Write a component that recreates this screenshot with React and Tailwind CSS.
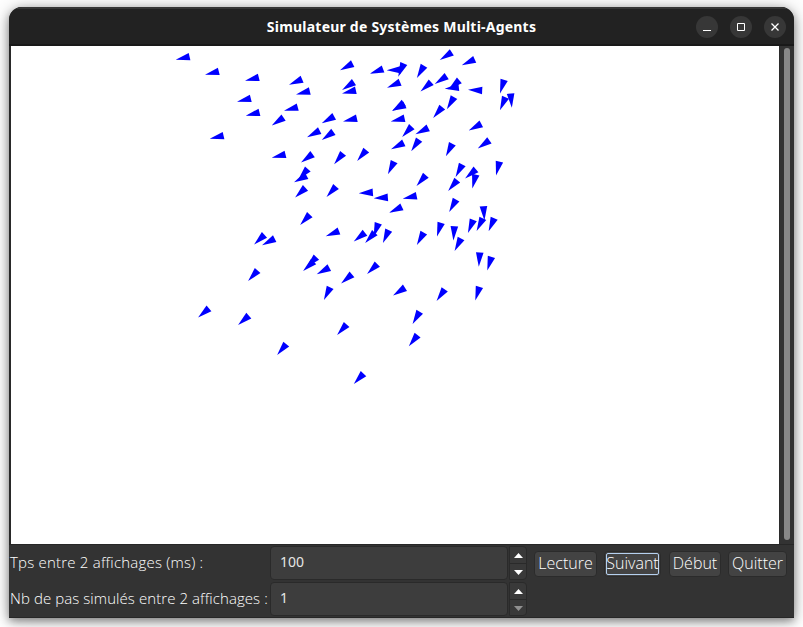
import React from "react";

// Each agent: [tip x, tip y, angle in degrees from tip towards the base]
const AGENTS = [
  [176, 59.7, 13], [205.3, 74.7, 14], [245.3, 80.7, 14], [237.3, 101.7, 14], [246, 115.7, 14],
  [210, 138.7, 13], [289.3, 84.7, 23], [296.3, 94.3, 14], [284.3, 110.7, 15], [272, 125.3, 34],
  [272, 157.7, 14], [307.3, 137, 27], [301.3, 162.3, 36], [294.3, 182, 28], [298.5, 179.3, 48],
  [295.3, 197.3, 43], [340.3, 70, 27], [370, 73.7, 20], [387, 70.3, 2], [398.3, 76.3, 67],
  [387.3, 87.7, 23], [417, 77.7, 60], [420.7, 91.3, 41], [342.3, 89.7, 33], [342.3, 93.3, 13],
  [392.3, 110.7, 34], [392.3, 110.7, 25], [391, 121.3, 13], [343.3, 121.3, 13], [322, 123, 29],
  [322, 139.7, 35], [402.3, 136.7, 47], [415.7, 134, 26], [391.3, 149, 26], [411.3, 151, 56],
  [440, 59.7, 32], [462, 65, 24], [435, 83.7, 33], [445, 88.7, 6], [448.7, 89.3, 40],
  [468.3, 89.7, -3], [500, 93, 73], [500, 110, 67], [511.7, 107.3, 95], [447, 109, 60],
  [433.3, 117.7, 50], [469, 130.3, 28], [478, 148.3, 35], [446, 156, 63], [334.3, 164, 51],
  [357.3, 160.7, 50], [388, 174, 64], [416.7, 185.7, 49], [326.7, 196.7, 48], [359, 193.3, 4],
  [374, 198.3, 4], [403, 198.7, 12], [389.3, 212.7, 25], [326, 236, 21], [354, 241.3, 38],
  [365.3, 242.7, 47], [373.7, 236.3, 71], [383, 242.7, 66], [417, 244.7, 61], [455.7, 176.7, 62],
  [465.3, 178.3, 40], [472.3, 188, 76], [448.3, 190.7, 50], [496, 175, 76], [449.3, 211.7, 61],
  [484.3, 220, 94], [476.7, 230.7, 64], [437, 236, 73], [453.3, 240, 86], [468, 232.7, 68],
  [488.7, 231, 67], [454.7, 250.7, 63], [478.7, 266.3, 86], [487.3, 270, 73], [436.7, 300.7, 55],
  [475.3, 300, 73], [300.3, 224.7, 47], [254.3, 244.3, 43], [262.3, 245, 27], [248.3, 280.7, 48],
  [303.3, 270.7, 42], [306.7, 267, 46], [317, 274, 28], [324, 299.7, 64], [198.3, 317.3, 40],
  [238.3, 324.7, 41], [277.3, 354.7, 50], [341.3, 283.3, 40], [367.3, 273.7, 44], [393.3, 295.3, 33],
  [337.3, 334.7, 48], [412.7, 323.7, 60], [409, 346, 52], [354, 383.7, 47],
];

function World() {
  return (
    <svg width="768" height="498" viewBox="11 46 768 498" className="block shrink-0 bg-white">
      {AGENTS.map(([x, y, a], i) => (
        <polygon key={i} points="-0.4,0 13.8,-3.8 13.8,3.8" fill="#0000ff" transform={`translate(${x + 0.1} ${y}) rotate(${-a})`} />
      ))}
    </svg>
  );
}

function TitleButton({ children }) {
  return (
    <button className="flex size-[22px] items-center justify-center rounded-full bg-[#373737]">
      <svg width="22" height="22" viewBox="0 0 22 22" fill="none" stroke="#fff">{children}</svg>
    </button>
  );
}

function Spinner({ value, downDisabled }) {
  return (
    <div className="flex h-[34px] gap-px">
      <div className="flex w-[238px] items-center rounded border border-[#2a2a2a] bg-[#3d3d3d] pb-[3px] pl-[9px] font-['Noto_Sans',sans-serif] text-[14px] font-normal text-[#e6e6e6]">
        {value}
      </div>
      <div className="flex w-[18px] flex-col rounded-r border border-[#2a2a2a] bg-[#393939]">
        <div className="flex h-[17px] items-center justify-center border-b border-[#2a2a2a]">
          <svg width="9" height="5" viewBox="0 0 9 5"><path d="M0 5L4.5 0L9 5z" fill="#fff" /></svg>
        </div>
        <div className="flex flex-1 items-center justify-center pt-px">
          <svg width="9" height="5" viewBox="0 0 9 5"><path d="M0 0L4.5 5L9 0z" fill={downDisabled ? "#919191" : "#fff"} /></svg>
        </div>
      </div>
    </div>
  );
}

function Label({ children, className }) {
  return <div className={`w-[261px] whitespace-nowrap pl-px text-[15px] leading-[32px] ${className}`}>{children}</div>;
}

function ActionButton({ children, className, focused }) {
  return (
    <button className={`flex h-[26px] items-center justify-center rounded border border-[#2b2b2b] bg-[#434343] p-px text-[16px] ${className}`}>
      <span className={`flex h-[22px] w-full items-center justify-center whitespace-nowrap rounded-[2px] border pb-0.5 ${focused ? "border-[#b5d0ef]" : "border-transparent"}`}>
        {children}
      </span>
    </button>
  );
}

export default function App() {
  return (
    <div className="h-[627px] w-[803px] overflow-hidden bg-white pl-[9px] pt-[7px] font-['Open_Sans',sans-serif] font-light text-white">
      <div className="flex h-[611px] w-[785px] flex-col overflow-hidden rounded-t-[13px] bg-[#333333] shadow-[0_3px_10px_rgba(0,0,0,0.45),0_1px_22px_rgba(0,0,0,0.2)]">
        <header className="flex h-[39px] shrink-0 items-center border-b-2 border-t-2 border-b-[#191919] border-t-[#363636] bg-[#222222] pl-[98px] pr-[8px]">
          <h1 className="flex-1 pb-px text-center font-['Noto_Sans',sans-serif] text-[14px] font-bold tracking-[0.22px] text-white">
            Simulateur de Systèmes Multi-Agents
          </h1>
          <div className="flex gap-3">
            <TitleButton><path d="M7 14.5h8" /></TitleButton>
            <TitleButton><path d="M7.5 7.5h7v7h-7z" /></TitleButton>
            <TitleButton><path d="M7.5 7.5l7 7M14.5 7.5l-7 7" strokeWidth="1.3" /></TitleButton>
          </div>
        </header>
        <main className="flex h-[498px] shrink-0 border-l-2 border-[#292929]">
          <World />
          <div className="flex flex-1 justify-end border-l border-[#2b2b2b] pb-1 pr-[4px] pt-[2px]">
            <div className="w-[6px] rounded-full bg-[#888888]" />
          </div>
        </main>
        <footer className="flex flex-1 border-b border-t border-[#272727] pt-px">
          <div className="flex flex-col gap-[2px]">
            <div className="flex">
              <Label className="tracking-[0.21px]">Tps entre 2 affichages (ms) :</Label>
              <Spinner value="100" />
            </div>
            <div className="flex">
              <Label className="tracking-[0.08px]">Nb de pas simulés entre 2 affichages :</Label>
              <Spinner value="1" downDisabled />
            </div>
          </div>
          <div className="flex pl-[7px] pt-[5px]">
            <ActionButton className="w-[63px]">Lecture</ActionButton>
            <ActionButton className="ml-[7px] w-[57px]" focused>Suivant</ActionButton>
            <ActionButton className="ml-2 w-[52px]">Début</ActionButton>
            <ActionButton className="ml-[7px] w-[59px]">Quitter</ActionButton>
          </div>
        </footer>
      </div>
    </div>
  );
}
